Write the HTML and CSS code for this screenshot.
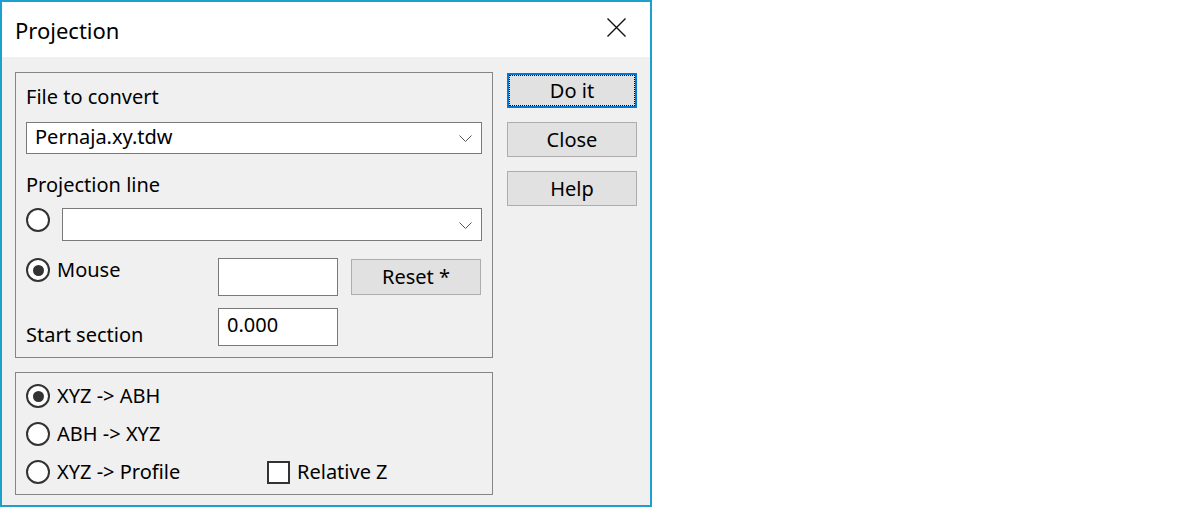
FILE: index.html
```html
<!DOCTYPE html>
<html>
<head>
<meta charset="utf-8">
<link rel="stylesheet" href="styles.css">
</head>
<body>
<div class="window">
  <div class="titlebar">
    <span class="title">Projection</span>
    <svg class="close" width="19" height="19" viewBox="0 0 19 19"><path d="M0.5 0.5 L18.5 18.5 M18.5 0.5 L0.5 18.5" stroke="#111" stroke-width="1.4" fill="none"/></svg>
  </div>
  <div class="content">
    <div class="left">
      <div class="group g1">
        <div class="label l1">File to convert</div>
        <div class="combo c1"><span class="ctext">Pernaja.xy.tdw</span><svg class="chev" width="13" height="7" viewBox="0 0 13 7"><polyline points="0.5,0.5 6.5,6.5 12.5,0.5" fill="none" stroke="#555" stroke-width="1"/></svg></div>
        <div class="label l2">Projection line</div>
        <div class="row r-line">
          <span class="radio"></span>
          <div class="combo c2"><span class="ctext"></span><svg class="chev" width="13" height="7" viewBox="0 0 13 7"><polyline points="0.5,0.5 6.5,6.5 12.5,0.5" fill="none" stroke="#555" stroke-width="1"/></svg></div>
        </div>
        <div class="row r-mouse">
          <label class="opt"><span class="radio on"></span><span class="otext">Mouse</span></label>
          <div class="edit"></div>
          <button class="btn reset">Reset *</button>
        </div>
        <div class="row r-start">
          <span class="label slabel">Start section</span>
          <div class="edit">0.000</div>
        </div>
      </div>
      <div class="group g2">
        <label class="opt"><span class="radio on"></span><span class="otext">XYZ -&gt; ABH</span></label>
        <label class="opt"><span class="radio"></span><span class="otext">ABH -&gt; XYZ</span></label>
        <div class="row r-prof">
          <label class="opt"><span class="radio"></span><span class="otext">XYZ -&gt; Profile</span></label>
          <label class="opt"><span class="check"></span><span class="otext">Relative Z</span></label>
        </div>
      </div>
    </div>
    <div class="buttons">
      <button class="btn side default">Do it</button>
      <button class="btn side">Close</button>
      <button class="btn side">Help</button>
    </div>
  </div>
</div>
</body>
</html>
```

FILE: styles.css
```css
html, body {
  margin: 0;
  padding: 0;
  background: #ffffff;
}
body {
  font-family: "Noto Sans", "Open Sans", sans-serif;
  font-size: 20px;
  color: #000;
}
.window {
  width: 652px;
  height: 507px;
  box-sizing: border-box;
  border: 2px solid #1ba1cc;
  background: #f0f0f0;
  display: flex;
  flex-direction: column;
}
.titlebar {
  height: 55px;
  flex: none;
  background: #fff;
  display: flex;
  align-items: center;
  justify-content: space-between;
  padding: 0 24px 0 13px;
}
.title {
  font-size: 22px;
  line-height: 28px;
}
.close {
  display: block;
  margin-top: -4px;
}
.content {
  display: flex;
  padding: 15px 0 0 13px;
}
.left {
  width: 478px;
  display: flex;
  flex-direction: column;
  gap: 14px;
}
.group {
  border: 1px solid #858585;
  box-sizing: border-box;
  display: flex;
  flex-direction: column;
  padding: 0 10px;
}
.g1 { height: 286px; }
.g2 { height: 123px; padding-top: 11px; gap: 14px; }
.label {
  line-height: 26px;
  white-space: nowrap;
}
.l1 { margin-top: 11px; }
.l2 { margin-top: 18px; }
.combo {
  box-sizing: border-box;
  border: 1px solid #7a7a7a;
  background: #fff;
  display: flex;
  justify-content: space-between;
  align-items: flex-start;
  padding: 1px 9px 0 8px;
}
.ctext { line-height: 26px; }
.chev { align-self: center; display: block; }
.c1 { height: 32px; margin-top: 12px; }
.c2 { height: 33px; flex: 1; }
.row { display: flex; }
.r-line { margin-top: 10px; gap: 12px; align-items: flex-start; }
.r-mouse {
  margin-top: 17px;
  display: grid;
  grid-template-columns: 179px 120px 130px;
  column-gap: 13px;
  align-items: start;
}
.r-start {
  margin-top: 12px;
  display: grid;
  grid-template-columns: 192px 120px;
  align-items: end;
}
.slabel { line-height: 22px; }
.edit {
  box-sizing: border-box;
  height: 38px;
  border: 1px solid #7a7a7a;
  background: #fff;
  padding: 3px 8px 2px;
  line-height: 26px;
}
.opt {
  display: flex;
  align-items: center;
  gap: 7px;
  height: 24px;
  white-space: nowrap;
}
.otext { line-height: 24px; }
.radio {
  width: 24px;
  height: 24px;
  box-sizing: border-box;
  border: 2px solid #333;
  border-radius: 50%;
  background: #fff;
  display: flex;
  align-items: center;
  justify-content: center;
  flex: none;
}
.radio.on::after {
  content: "";
  width: 11px;
  height: 11px;
  border-radius: 50%;
  background: #333;
}
.check {
  width: 23px;
  height: 23px;
  box-sizing: border-box;
  border: 2px solid #333;
  background: #fff;
  flex: none;
}
.r-prof {
  display: grid;
  grid-template-columns: 241px auto;
}
.btn {
  font-family: inherit;
  font-size: 20px;
  color: #000;
  background: #e1e1e1;
  border: 1px solid #adadad;
  box-sizing: border-box;
  padding: 0;
  margin: 0;
  line-height: 24px;
}
.reset { height: 36px; margin-top: 1px; }
.buttons {
  margin-left: 14px;
  padding-top: 1px;
  display: flex;
  flex-direction: column;
  gap: 14px;
}
.side { width: 130px; height: 35px; }
.default {
  border: 2px solid #0078d7;
  outline: 1px dotted #000;
  outline-offset: -3px;
}
```
